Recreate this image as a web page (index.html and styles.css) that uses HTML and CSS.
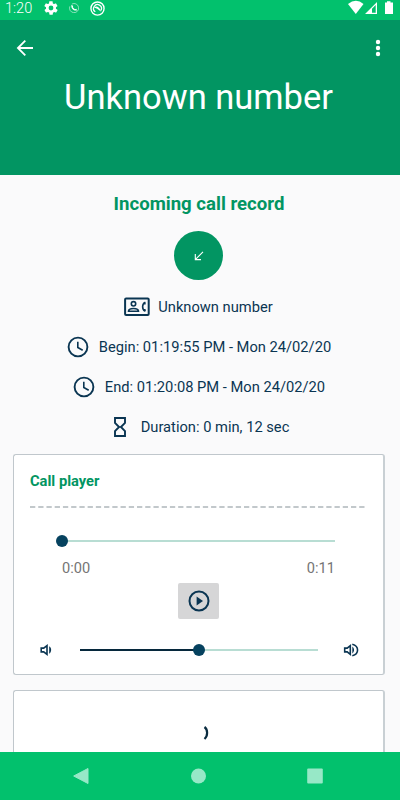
FILE: index.html
```html
<!DOCTYPE html>
<html lang="en">
<head>
    <meta charset="UTF-8">
    <meta name="viewport" content="width=device-width, initial-scale=1.0">
    <title>Call record</title>
    <link rel="stylesheet" href="styles.css">
</head>
<body>
    <div class="statusBar">
        <span class="time">1:20</span>
        <svg class="gear" width="16" height="16" viewBox="0 0 24 24"><path fill="#fff" fill-rule="evenodd" d="M19.4 13c0-.3.1-.6.1-1s0-.7-.1-1l2.1-1.600c.2-.2.3-.4.1-.7l-2-3.400c-.1-.2-.4-.3-.6-.2l-2.500 1c-.5-.4-1.100-.7-1.700-1l-.4-2.600c0-.3-.2-.5-.5-.5h-4c-.2 0-.4.2-.5.4l-.4 2.700c-.6.200-1.100.600-1.700 1l-2.500-1c-.2-.1-.5 0-.6.2l-2 3.400c-.1.2-.1.500.1.700L4.600 11c0 .3-.1.700-.1 1s0 .7.1 1l-2.100 1.600c-.2.200-.3.400-.1.700l2 3.400c.1.200.4.300.6.200l2.500-1c.5.400 1.100.7 1.700 1l.4 2.600c0 .300.200.500.5.500h4c.2 0 .5-.2.500-.4l.4-2.700c.6-.2 1.200-.6 1.700-1l2.500 1c.2.100.5 0 .6-.2l2-3.400c.1-.2.100-.5-.1-.7zM12 15.600a3.600 3.600 0 1 1 0-7.200a3.600 3.600 0 0 1 0 7.200z"/></svg>
        <svg class="phone" width="10" height="10" viewBox="0 0 24 24" fill="none" stroke="#fff"><path d="M7 2.500A11 11 0 1 1 2 8" stroke-width="1.800" opacity=".7"/><path d="M6 4c-2 8 4 15 13 14l-1-4-4 1-5-5 1-3z" fill="#fff" stroke="none"/></svg>
        <svg class="record" width="15" height="15" viewBox="0 0 24 24" fill="none" stroke="#fff"><circle cx="12" cy="12" r="10.500" stroke-width="2.200"/><path d="M8.500 17.300A6.300 6.300 0 1 1 17.600 15" stroke-width="2"/><path d="M6.500 10.500c3.500-3.500 8-2 11.500 6.500l-4.500-3-2-1.500z" fill="#fff" stroke="none"/></svg>
        <svg class="signals" width="48" height="16" viewBox="0 0 48 16"><path fill="#fff" d="M0 3.900Q8-2.200 15.500 3.900L7.800 14z"/><path fill="#fff" fill-rule="evenodd" d="M17 14L29 2v12zM24 8.800v4h3.700V5z"/><path fill="#fff" d="M39 1.300h3.500v1.200H45V14h-8V2.500h2z"/></svg>
    </div>
    <header>
        <div class="toolbar">
            <svg width="18" height="18" viewBox="0 0 18 18" fill="none" stroke="#fff" stroke-width="1.800"><path d="M17 9H2M9.300 1.600L1.900 9l7.400 7.400"/></svg>
            <svg width="6" height="18" viewBox="0 0 6 18" fill="#fff"><circle cx="3" cy="3" r="2.200"/><circle cx="3" cy="9" r="2.200"/><circle cx="3" cy="15" r="2.200"/></svg>
        </div>
        <h1><span>Unknown number</span></h1>
    </header>
    <main>
        <h2><span>Incoming call record</span></h2>
        <div class="callType">
            <svg width="10" height="10" viewBox="0 0 10 10" fill="none" stroke="#fff" stroke-width="1.100"><path d="M9 .9L1.500 8.400M1.300 3v5.600H7"/></svg>
        </div>
        <div class="info">
            <svg width="26" height="20" viewBox="0 0 26 20" fill="none" stroke="#0a3552"><rect x="1.100" y="1.600" width="23.600" height="16.500" rx="1" stroke-width="2"/><circle cx="9.500" cy="6.800" r="2.200" stroke-width="1.600"/><path d="M4.500 14.300c0-3.800 10-3.800 10 0z" stroke-width="1.600"/><path d="M21.400 5.300c-3.700 1.400-3.700 7.600 0 9" stroke-width="1.600"/><path d="M19.500 6.600h2.100M19.500 13h2.100" stroke-width="1.900"/></svg>
            <span class="text">Unknown number</span>
        </div>
        <div class="info time-info">
            <svg width="22" height="22" viewBox="0 0 22 22" fill="none" stroke="#0a3552"><circle cx="11" cy="11" r="9.400" stroke-width="1.900"/><path d="M10.800 5.700v5.800l4.900 2.700" stroke-width="1.600"/></svg>
            <span class="text">Begin: 01:19:55 PM - Mon 24/02/20</span>
        </div>
        <div class="info time-info">
            <svg width="22" height="22" viewBox="0 0 22 22" fill="none" stroke="#0a3552"><circle cx="11" cy="11" r="9.400" stroke-width="1.900"/><path d="M10.800 5.700v5.800l4.900 2.700" stroke-width="1.600"/></svg>
            <span class="text">End: 01:20:08 PM - Mon 24/02/20</span>
        </div>
        <div class="info duration">
            <svg class="hourglass" width="14" height="20" viewBox="0 0 14 20" fill="none" stroke="#0a3552" stroke-width="1.900"><path d="M2 1h10v4.800L7.900 10l4.100 4.200V19H2v-4.800L6.100 10 2 5.800z"/></svg>
            <span class="text">Duration: 0 min, 12 sec</span>
        </div>

        <section class="card player">
            <h3><span>Call player</span></h3>
            <svg class="divider" width="335" height="2" viewBox="0 0 335 2"><path d="M0 1H335" stroke="#afb6bb" stroke-width="1.500" stroke-dasharray="5.300 2.930"/></svg>
            <div class="track seek"><i class="thumb"></i></div>
            <div class="times">
                <span>0:00</span>
                <span>0:11</span>
            </div>
            <button class="play">
                <svg width="22" height="22" viewBox="0 0 22 22"><circle cx="11" cy="11" r="9.500" fill="none" stroke="#0a3552" stroke-width="2"/><path d="M8.600 6.600v8.800L15 11z" fill="#0a3552"/></svg>
            </button>
            <div class="volume">
                <svg width="16" height="16" viewBox="0 0 16 16" fill="none" stroke="#0a3552" stroke-width="1.600"><path d="M2.200 6.100h2.500L8 3.600v8.800L4.700 9.900H2.200z"/><path d="M10.200 4.300c2.600 1.500 2.600 5.900 0 7.400z" fill="#0a3552" stroke="none"/></svg>
                <div class="track level"><i class="done"></i><i class="thumb"></i></div>
                <svg width="16" height="16" viewBox="0 0 16 16" fill="none" stroke="#0a3552" stroke-width="1.600"><path d="M1.700 6.100h2.500L7.300 3.600v8.800L4.200 9.900H1.700z"/><path d="M9.300 4.600c2.300 1.500 2.300 5.300 0 6.800z" fill="#0a3552" stroke="none"/><path d="M9.300 2.200c7 1.800 7 9.800 0 11.600"/></svg>
            </div>
        </section>

        <section class="card loading">
            <svg width="8" height="16" viewBox="0 0 8 16" fill="none" stroke="#0a2c40" stroke-width="2.200"><path d="M2.500 2c3.500 2.600 3.500 9 0 12"/></svg>
        </section>
    </main>
    <nav>
        <svg width="16" height="16" viewBox="0 0 16 16" fill="#97e8c7"><path d="M15 .5v15L.7 8z" stroke="#97e8c7" stroke-linejoin="round"/></svg>
        <svg width="16" height="16" viewBox="0 0 16 16" fill="#97e8c7"><circle cx="8.500" cy="8" r="7.500"/></svg>
        <svg width="16" height="16" viewBox="0 0 16 16" fill="#97e8c7"><rect x=".2" y=".5" width="15.600" height="15" rx="1"/></svg>
    </nav>
</body>
</html>
```
FILE: styles.css
```css
* {
    box-sizing: border-box;
}
body {
    margin: 0;
    height: 800px;
    overflow: hidden;
    display: flex;
    flex-direction: column;
    background-color: #fafafb;
    font-family: Roboto, sans-serif;
    color: #0a3552;
}
svg {
    display: block;
    flex-shrink: 0;
}
h1, h2, h3 {
    margin: 0;
    white-space: nowrap;
}
.statusBar {
    height: 20px;
    flex-shrink: 0;
    display: flex;
    align-items: center;
    padding: 0 4px 4px 5px;
    background-color: #02c16d;
    color: #fff;
}
.time {
    width: 28px;
    padding-top: 2px;
    font-size: 14.5px;
    line-height: 16px;
    font-weight: 300;
}
.gear {
    margin-left: 10px;
}
.phone {
    margin-left: 10px;
}
.record {
    margin-left: 11px;
}
.signals {
    margin-left: auto;
}
header {
    height: 155px;
    flex-shrink: 0;
    background-color: #029562;
    color: #fff;
}
.toolbar {
    display: flex;
    justify-content: space-between;
    padding: 19px 19px 0 16px;
}
h1 {
    margin-top: 19px;
    padding-right: 3px;
    font-size: 34.5px;
    line-height: 43px;
    font-weight: 400;
    text-align: center;
}
main {
    flex: 1;
    min-height: 0;
    overflow: hidden;
    display: flex;
    flex-direction: column;
    align-items: center;
    padding: 17px 15px 0 13px;
}
h2 {
    font-size: 18.6px;
    line-height: 25px;
    color: #029562;
}
.callType {
    width: 49px;
    height: 49px;
    flex-shrink: 0;
    margin: 14px 1px 7px 0;
    display: flex;
    align-items: center;
    justify-content: center;
    border-radius: 50%;
    background-color: #029562;
}
.info {
    height: 40px;
    flex-shrink: 0;
    display: flex;
    align-items: center;
    gap: 8px;
    margin-right: 1px;
}
.time-info {
    gap: 10px;
    margin-right: 0;
}
.duration {
    margin: 0 0 0 4px;
}
.text {
    font-size: 14.7px;
    white-space: nowrap;
}
.hourglass {
    margin-right: 6px;
}
.card {
    width: 372px;
    flex-shrink: 0;
    border: 1px solid #c0c7cc;
    border-right: 2px solid #c9d0d4;
    border-radius: 3px;
    background-color: #fff;
}
.player {
    height: 221px;
    margin-top: 7px;
    padding: 16px 17px 0 16px;
    display: flex;
    flex-direction: column;
}
h3 {
    font-size: 14.7px;
    line-height: 20px;
    color: #029562;
}
.divider {
    margin-top: 15px;
}
.track {
    position: relative;
    height: 2px;
    background-color: #b8ddd3;
}
.thumb {
    position: absolute;
    top: -5px;
    left: -6px;
    width: 12px;
    height: 12px;
    border-radius: 50%;
    background-color: #06425f;
}
.seek {
    margin: 32px 31px 0 32px;
}
.times {
    display: flex;
    justify-content: space-between;
    margin: 17px 31px 0 32px;
    font-size: 14.6px;
    line-height: 18px;
    color: #757575;
}
.play {
    width: 41px;
    height: 36px;
    margin: 6px 0 0 148px;
    padding: 0;
    display: flex;
    align-items: center;
    justify-content: center;
    border: none;
    border-radius: 2px;
    background-color: #d6d6d7;
}
.volume {
    display: flex;
    align-items: center;
    margin: 23px 0 0 9px;
}
.level {
    width: 238px;
    margin: 0 25px;
}
.level .thumb {
    left: 113px;
}
.done {
    display: block;
    width: 50%;
    height: 2px;
    background-color: #06283c;
}
.loading {
    height: 120px;
    margin-top: 15px;
    padding: 34px 0 0 188px;
}
nav {
    height: 48px;
    flex-shrink: 0;
    display: flex;
    align-items: center;
    justify-content: space-between;
    padding: 0 77px 0 73px;
    background-color: #02c16d;
}
```
